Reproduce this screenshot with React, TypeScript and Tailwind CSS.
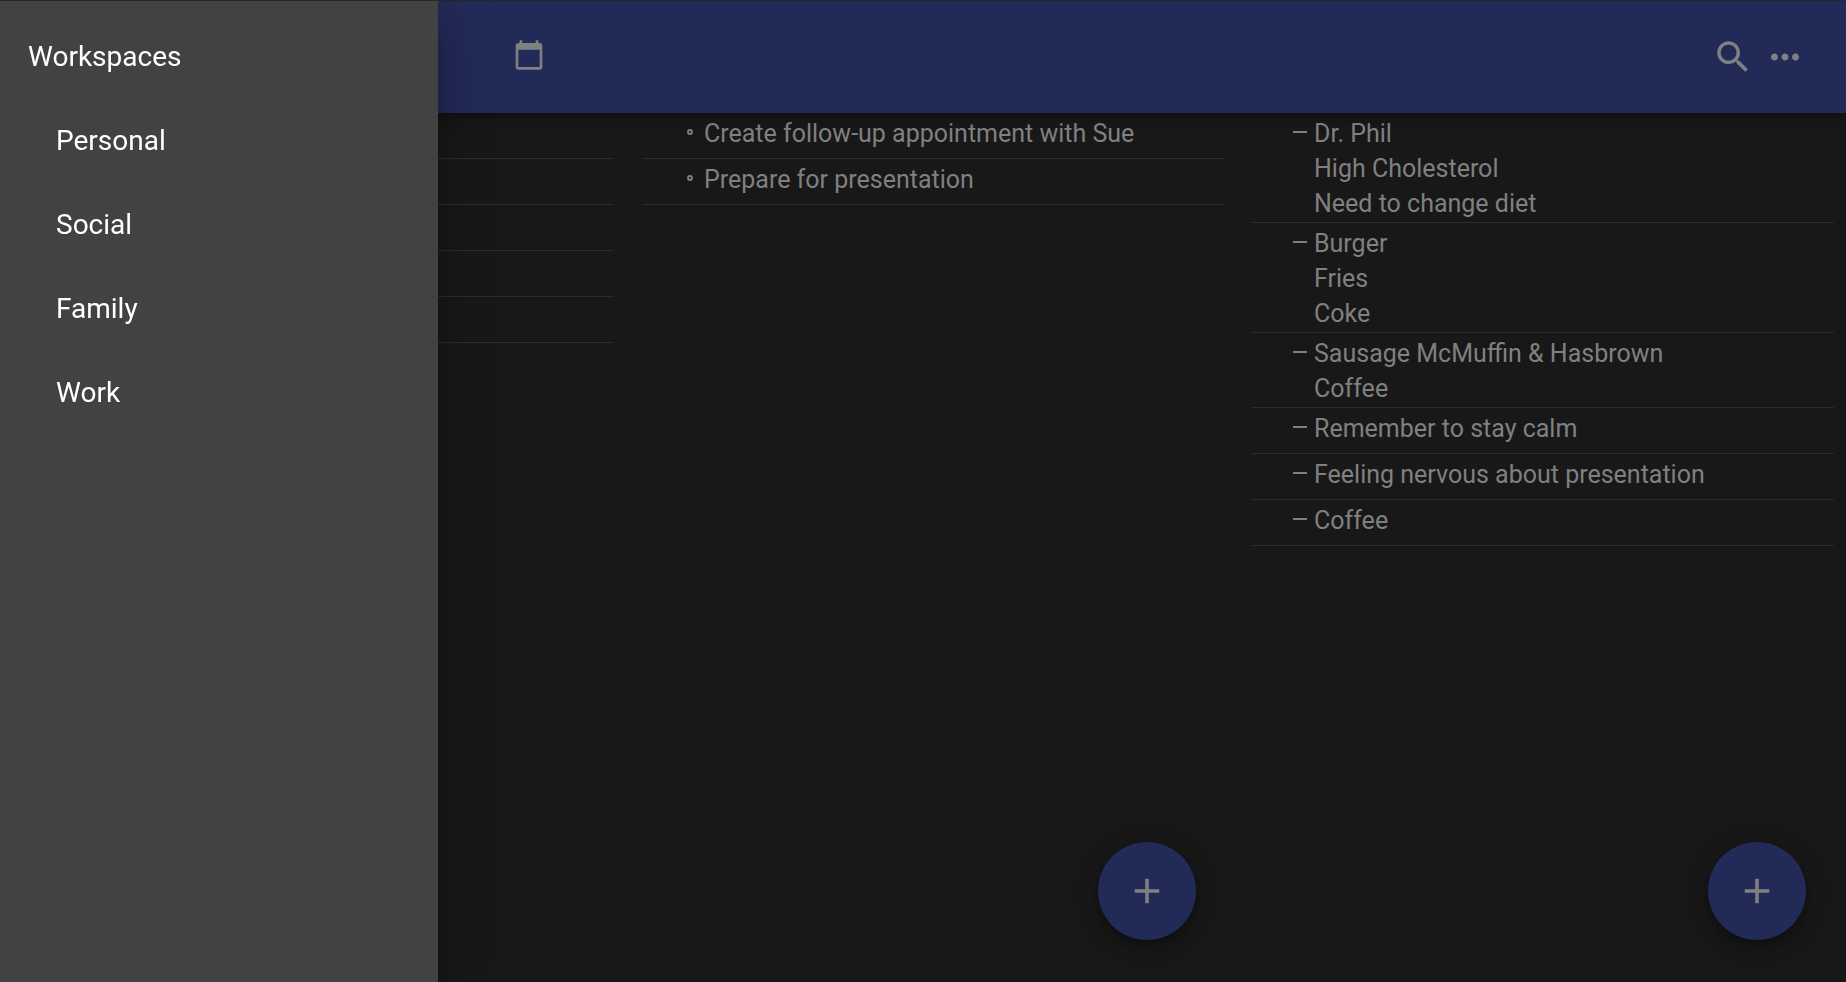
import React from "react";

type Kind = "task" | "note";

const workspaces = ["Personal", "Social", "Family", "Work"];

const tasks = ["Create follow-up appointment with Sue", "Prepare for presentation"];

const notes = [
  ["Dr. Phil", "High Cholesterol", "Need to change diet"],
  ["Burger", "Fries", "Coke"],
  ["Sausage McMuffin & Hasbrown", "Coffee"],
  ["Remember to stay calm"],
  ["Feeling nervous about presentation"],
  ["Coffee"],
];

function Icon({ d, className }: { d: string; className: string }) {
  return (
    <svg viewBox="0 0 24 24" fill="currentColor" aria-hidden="true" className={className}>
      <path d={d} />
    </svg>
  );
}

const paths = {
  add: "M19 13h-6v6h-2v-6H5v-2h6V5h2v6h6v2z",
  dash: "M5 11h14v2H5z",
  more: "M6 10c-1.1 0-2 .9-2 2s.9 2 2 2 2-.9 2-2-.9-2-2-2zm12 0c-1.1 0-2 .9-2 2s.9 2 2 2 2-.9 2-2-.9-2-2-2zm-6 0c-1.1 0-2 .9-2 2s.9 2 2 2 2-.9 2-2-.9-2-2-2z",
  search:
    "M15.5 14h-.79l-.28-.27C15.41 12.59 16 11.11 16 9.5 16 5.91 13.09 3 9.5 3S3 5.91 3 9.5 5.91 16 9.5 16c1.61 0 3.09-.59 4.23-1.57l.27.28v.79l5 4.99L20.49 19l-4.99-5zm-6 0C7.01 14 5 11.99 5 9.5S7.01 5 9.5 5 14 7.01 14 9.5 11.99 14 9.5 14z",
  calendar:
    "M20 3h-1V1h-2v2H7V1H5v2H4c-1.1 0-2 .9-2 2v16c0 1.1.9 2 2 2h16c1.1 0 2-.9 2-2V5c0-1.1-.9-2-2-2zm0 18H4V8h16v13z",
};

function Entry({ kind, lines }: { kind: Kind; lines: string[] }) {
  return (
    <li className="flex min-h-[46px] border-b border-[#2c2c2c] pt-[3px] pb-px pl-9">
      <span className="flex h-8 w-[26px] shrink-0 items-center">
        {kind === "note" ? (
          <Icon d={paths.dash} className="size-6" />
        ) : (
          <svg viewBox="0 0 24 24" fill="none" stroke="currentColor" strokeWidth="1.8" aria-hidden="true" className="size-6">
            <circle cx="12" cy="12" r="2" />
          </svg>
        )}
      </span>
      <div>
        {lines.map((line) => (
          <p key={line}>{line}</p>
        ))}
      </div>
    </li>
  );
}

function AddButton({ label }: { label: string }) {
  return (
    <button
      type="button"
      aria-label={label}
      className="mt-auto mr-7 mb-[42px] flex size-[98px] shrink-0 items-center justify-center self-end rounded-full bg-[#222a58] shadow-[0_5px_9px_-2px_rgba(0,0,0,0.2),0_10px_18px_rgba(0,0,0,0.14),0_2px_32px_rgba(0,0,0,0.12)]"
    >
      <Icon d={paths.add} className="size-[42px]" />
    </button>
  );
}

export default function App() {
  return (
    <div className="min-h-screen bg-[#181818] font-[Roboto,sans-serif] text-[#808080]">
      <header className="fixed inset-x-0 top-0 z-10 flex h-[113px] items-center border-t border-[#272727] bg-[#222a58] pr-10 pl-[513px] shadow-[0_4px_7px_-2px_rgba(0,0,0,0.2),0_7px_9px_rgba(0,0,0,0.14),0_2px_18px_rgba(0,0,0,0.12)]">
        <button type="button" aria-label="Calendar" className="pb-1">
          <Icon d={paths.calendar} className="size-8" />
        </button>
        <div className="ml-auto flex gap-[10px]">
          <button type="button" aria-label="Search">
            <Icon d={paths.search} className="size-[42px]" />
          </button>
          <button type="button" aria-label="More options">
            <Icon d={paths.more} className="size-[42px]" />
          </button>
        </div>
      </header>

      <main className="grid min-h-screen grid-cols-3 gap-7 pt-[113px] pr-3 pl-8 text-[25px] leading-[35px]">
        <section className="flex flex-col">
          <ul>
            {[0, 1, 2, 3, 4].map((n) => (
              <li key={n} className="min-h-[46px] border-b border-[#2c2c2c]" />
            ))}
          </ul>
        </section>
        <section className="flex flex-col">
          <ul>
            {tasks.map((task) => (
              <Entry key={task} kind="task" lines={[task]} />
            ))}
          </ul>
          <AddButton label="Add task" />
        </section>
        <section className="flex flex-col">
          <ul>
            {notes.map((lines, n) => (
              <Entry key={n} kind="note" lines={lines} />
            ))}
          </ul>
          <AddButton label="Add note" />
        </section>
      </main>

      <aside className="fixed inset-y-0 left-0 z-20 w-[438px] border-t border-[#272727] bg-[#424242] py-3.5 text-[28px] leading-[42px] text-white shadow-[0_14px_18px_-9px_rgba(0,0,0,0.2),0_28px_42px_4px_rgba(0,0,0,0.14),0_10px_52px_9px_rgba(0,0,0,0.12)]">
        <h2 className="flex h-[84px] items-center px-7">Workspaces</h2>
        <nav>
          {workspaces.map((name) => (
            <a key={name} href="#" className="flex h-[84px] items-center px-14">
              {name}
            </a>
          ))}
        </nav>
      </aside>
    </div>
  );
}
